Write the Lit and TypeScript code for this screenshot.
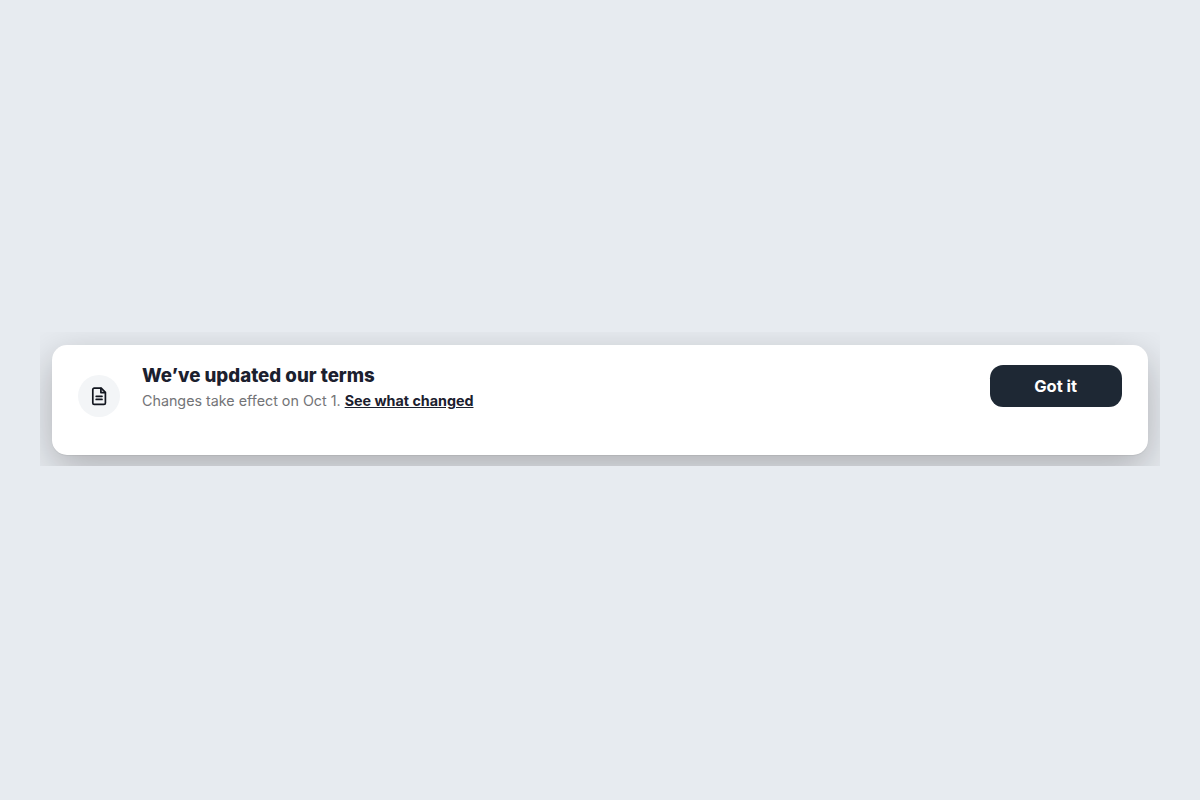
import { LitElement, css, html } from "lit";
import { customElement, property } from "lit/decorators.js";

@customElement("terms-banner")
export class TermsBanner extends LitElement {
  static styles = css`
    :host {
      display: block;
      overflow: hidden;
      padding: 13px 12px 11px;
    }

    .banner {
      box-sizing: border-box;
      display: flex;
      align-items: flex-start;
      height: 110px;
      padding: 19.5px 26.4px 0 26px;
      background: #fff;
      border-radius: 15px;
      box-shadow: 0 13px 38px rgba(10, 5, 5, 0.26),
        0 1px 1px rgba(0, 0, 0, 0.06);
    }

    .icon {
      display: flex;
      flex: none;
      align-items: center;
      justify-content: center;
      align-self: flex-start;
      width: 42px;
      height: 42px;
      margin: 10.5px 22px 0 0;
      border-radius: 50%;
      background: #f3f5f7;
      color: #12161f;
    }

    .text {
      flex: 1;
    }

    .title {
      margin: 0;
      font-size: 18.7px;
      font-weight: 800;
      line-height: 22px;
      color: #1b202e;
    }

    .message {
      margin: 4px 0 0;
      font-size: 14.3px;
      line-height: 20px;
      color: #737477;
    }

    .link {
      font-weight: 700;
      color: #1b202e;
      text-decoration: underline;
      text-underline-offset: 1px;
    }

    .accept {
      flex: none;
      width: 132px;
      height: 42.5px;
      padding: 0;
      border: none;
      border-radius: 13.2px;
      background: #1e2834;
      color: #fff;
      font: 700 16.5px/43px Inter, sans-serif;
    }
  `;

  @property()
  heading = "We’ve updated our terms";

  protected render(): unknown {
    return html`
      <section class="banner">
        <div class="icon">
          <svg
            width="20"
            height="20"
            viewBox="0 0 20 20"
            fill="none"
            stroke="currentColor"
            stroke-width="1.7"
            stroke-linejoin="round"
            stroke-linecap="round"
          >
            <path
              d="M5.2 2.1h7l4.2 4.2v10.6a1.4 1.4 0 0 1-1.4 1.4H5.2a1.4 1.4 0 0 1-1.4-1.4V3.5a1.4 1.4 0 0 1 1.4-1.4z"
            />
            <path d="M11.9 2.4v4.2h4.2M7.2 10.3h5.8M7.2 13.4h5.8" />
          </svg>
        </div>
        <div class="text">
          <h2 class="title">${this.heading}</h2>
          <p class="message">
            Changes take effect on Oct 1.
            <a class="link" href="#">See what changed</a>
          </p>
        </div>
        <button class="accept" type="button">Got it</button>
      </section>
    `;
  }
}

@customElement("app-root")
export class AppRoot extends LitElement {
  static styles = css`
    :host {
      box-sizing: border-box;
      display: block;
      height: 100vh;
      padding: 332px 40px 0;
      background: #e7ebf0;
      font-family: Inter, sans-serif;
    }
  `;

  protected render(): unknown {
    return html`<terms-banner></terms-banner>`;
  }
}
